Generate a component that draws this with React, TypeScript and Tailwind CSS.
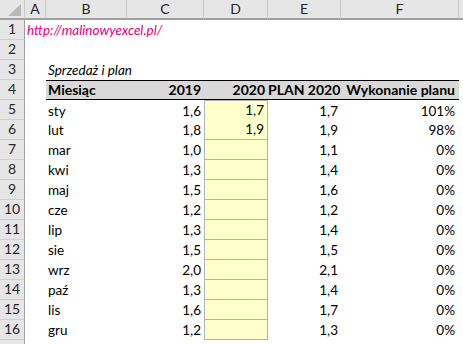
import React from "react";

const cols = ["A", "B", "C", "D", "E", "F"];

const rows: [string, string, string, string, string][] = [
  ["sty", "1,6", "1,7", "1,7", "101%"],
  ["lut", "1,8", "1,9", "1,9", "98%"],
  ["mar", "1,0", "", "1,1", "0%"],
  ["kwi", "1,3", "", "1,4", "0%"],
  ["maj", "1,5", "", "1,6", "0%"],
  ["cze", "1,2", "", "1,2", "0%"],
  ["lip", "1,3", "", "1,4", "0%"],
  ["sie", "1,5", "", "1,5", "0%"],
  ["wrz", "2,0", "", "2,1", "0%"],
  ["paź", "1,3", "", "1,4", "0%"],
  ["lis", "1,6", "", "1,7", "0%"],
  ["gru", "1,2", "", "1,3", "0%"],
];

const grid = "grid grid-cols-[25px_21px_81px_77px_64px_73px_118px_1fr]";

function RowNum({ n }: { n?: number }) {
  return (
    <div className="h-[20px] bg-[#e6e6e6] border-r border-r-[#9f9f9f] border-b border-b-[#d0d0d0] flex items-end justify-center pb-[1px] text-[#262626] text-[14px] leading-[18px]">
      {n}
    </div>
  );
}

export default function App() {
  return (
    <div
      className="w-[463px] h-[344px] overflow-hidden bg-white text-black text-[13.5px]"
      style={{ fontFamily: "Lato, 'Open Sans', sans-serif" }}
    >
      {/* ── Column headers ─────────────────────────────── */}
      <div className={`${grid} h-[20px]`}>
        <div className="bg-[#e6e6e6] border-r border-r-[#c8c8c8] border-b-2 border-b-[#a0a0a0] relative">
          <svg className="absolute left-[8px] top-[4px]" width="14" height="13" viewBox="0 0 14 13">
            <polygon points="13,0 13,12 0,12" fill="#b8b8b8" />
          </svg>
        </div>
        {cols.map((c) => (
          <div
            key={c}
            className="bg-[#e6e6e6] border-r border-r-[#c8c8c8] border-b-2 border-b-[#a0a0a0] flex items-center justify-center text-[#262626] text-[14px] leading-none"
          >
            {c}
          </div>
        ))}
        <div className="bg-[#e6e6e6] border-b-2 border-b-[#a0a0a0]" />
      </div>

      {/* Row 1 – link */}
      <div className={`${grid} h-[20px]`}>
        <RowNum n={1} />
        <div className="col-span-7 flex items-end pl-[2px] pb-[1px] leading-[18px] italic text-[#e4007c] whitespace-nowrap">
          http://malinowyexcel.pl/
        </div>
      </div>

      {/* Row 2 – empty */}
      <div className={`${grid} h-[20px]`}>
        <RowNum n={2} />
      </div>

      {/* Row 3 – title */}
      <div className={`${grid} h-[20px]`}>
        <RowNum n={3} />
        <div />
        <div className="col-span-6 flex items-end pl-[2px] pb-[1px] leading-[18px] italic whitespace-nowrap">
          Sprzedaż i plan
        </div>
      </div>

      {/* Row 4 – table header */}
      <div className={`${grid} h-[20px]`}>
        <RowNum n={4} />
        <div />
        <div className="col-span-5 h-[20px] grid grid-cols-[81px_77px_64px_73px_118px] bg-[#d9d9d9] border-t border-b border-black font-bold text-[14px] leading-[17px] whitespace-nowrap">
          <div className="pl-[2px]">Miesiąc</div>
          <div className="pr-[3px] text-right">2019</div>
          <div className="pr-[3px] text-right">2020</div>
          <div className="pr-[3px] text-right">PLAN 2020</div>
          <div className="pr-[4px] text-right">Wykonanie planu</div>
        </div>
      </div>

      {/* Rows 5–16 – data */}
      {rows.map((r, i) => (
        <div key={r[0]} className={`${grid} h-[20px] leading-[18px]`}>
          <RowNum n={i + 5} />
          <div />
          <div className="pl-[2px] flex items-end pb-[1px]">{r[0]}</div>
          <div className="pr-[3px] flex items-end justify-end pb-[1px]">{r[1]}</div>
          <div
            className={`bg-[#ffffcc] border-x border-b border-[#b2b2b2] flex items-end justify-end pr-[3px] pb-[1px] ${i === 0 ? "border-t" : ""}`}
          >
            {r[2]}
          </div>
          <div className="pr-[3px] flex items-end justify-end pb-[1px]">{r[3]}</div>
          <div className="pr-[4px] flex items-end justify-end pb-[1px]">{r[4]}</div>
        </div>
      ))}

      {/* Row 17 – partly visible */}
      <div className={`${grid} h-[20px]`}>
        <RowNum />
      </div>
    </div>
  );
}
